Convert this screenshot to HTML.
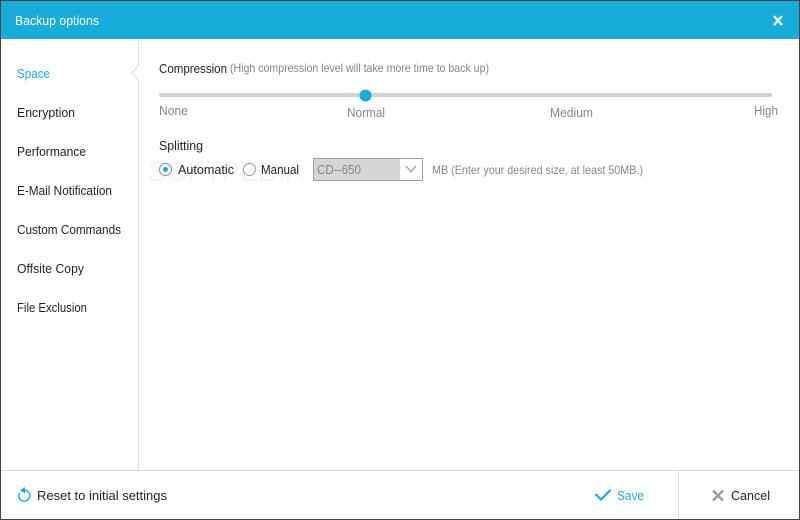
<!DOCTYPE html>
<html lang="en"><head><meta charset="utf-8"><title>Backup options</title>
<style>
html,body{margin:0;padding:0;background:#fff;width:800px;height:520px;overflow:hidden}
svg{display:block}
text{font-family:"Liberation Sans",sans-serif;font-size:13px;fill:#222233}
.g{fill:#85858f}
.b{fill:#18acdb}
</style></head><body>
<svg width="800" height="520" viewBox="0 0 800 520" xmlns="http://www.w3.org/2000/svg">
<rect width="800" height="520" fill="#fff"/>
<rect x="1" y="1" width="798" height="38" fill="#18acdb"/>
<!-- watermark -->
<text x="148" y="181" textLength="156" lengthAdjust="spacingAndGlyphs" style="font-size:28px;fill:#f5f5f5">SOFTPEDIA</text>
<text x="314" y="160" style="font-size:7px;fill:#eeeeee">®</text>
<!-- frame -->
<rect x="0" y="0" width="800" height="1" fill="#444"/>
<rect x="0" y="519" width="800" height="1" fill="#444"/>
<rect x="0" y="0" width="1" height="520" fill="#444"/>
<rect x="799" y="0" width="1" height="520" fill="#444"/>
<text x="15" y="25" textLength="84" lengthAdjust="spacingAndGlyphs" style="fill:#fff">Backup options</text>
<path d="M774 16l8 9M782 16l-8 9" stroke="#fff" stroke-width="2.200" fill="none"/>
<!-- sidebar divider -->
<path d="M138.500 41V65.500L131.500 73L138.500 80.500V470" stroke="#dcdcdc" fill="#fff"/>
<text x="17" y="78" textLength="33" lengthAdjust="spacingAndGlyphs" class="b">Space</text>
<text x="17" y="117" textLength="58" lengthAdjust="spacingAndGlyphs">Encryption</text>
<text x="17" y="156" textLength="69" lengthAdjust="spacingAndGlyphs">Performance</text>
<text x="17" y="195" textLength="95" lengthAdjust="spacingAndGlyphs">E-Mail Notification</text>
<text x="17" y="234" textLength="104" lengthAdjust="spacingAndGlyphs">Custom Commands</text>
<text x="17" y="273" textLength="67" lengthAdjust="spacingAndGlyphs">Offsite Copy</text>
<text x="17" y="312" textLength="70" lengthAdjust="spacingAndGlyphs">File Exclusion</text>
<!-- compression -->
<text x="159" y="73" textLength="68" lengthAdjust="spacingAndGlyphs">Compression</text>
<text x="230" y="72" textLength="259" lengthAdjust="spacingAndGlyphs" style="font-size:12px" class="g">(High compression level will take more time to back up)</text>
<rect x="159" y="93" width="613" height="4" rx="2" fill="#d0d0d0"/>
<circle cx="365.500" cy="95.500" r="6" fill="#18acdb"/>
<text x="159" y="115" textLength="29" lengthAdjust="spacingAndGlyphs" class="g">None</text>
<text x="347" y="117" textLength="38" lengthAdjust="spacingAndGlyphs" class="g">Normal</text>
<text x="550" y="117" textLength="43" lengthAdjust="spacingAndGlyphs" class="g">Medium</text>
<text x="754" y="115" textLength="24" lengthAdjust="spacingAndGlyphs" class="g">High</text>
<!-- splitting -->
<text x="159" y="150" textLength="44" lengthAdjust="spacingAndGlyphs">Splitting</text>
<circle cx="165.500" cy="169.500" r="6" fill="#fff" stroke="#8c8c8c"/>
<circle cx="165.500" cy="169.500" r="2.500" fill="#18acdb"/>
<text x="178" y="174" textLength="56" lengthAdjust="spacingAndGlyphs">Automatic</text>
<circle cx="249.500" cy="169.500" r="6" fill="#fff" stroke="#9c9c9c"/>
<text x="261" y="174" textLength="38" lengthAdjust="spacingAndGlyphs">Manual</text>
<rect x="313.500" y="158.500" width="109" height="22" fill="#fff" stroke="#9aa0a4"/>
<rect x="314" y="159" width="86" height="21" fill="#d6d6d6"/>
<text x="317" y="174" textLength="44" lengthAdjust="spacingAndGlyphs" class="g">CD--650</text>
<path d="M406 166l5 6 5-6" stroke="#8a8a8a" fill="none"/>
<text x="432" y="174" textLength="211" lengthAdjust="spacingAndGlyphs" style="font-size:12px" class="g">MB (Enter your desired size, at least 50MB.)</text>
<!-- footer -->
<rect x="1" y="470" width="798" height="1" fill="#dcdcdc"/>
<rect x="678" y="471" width="1" height="48" fill="#dcdcdc"/>
<path d="M22.500 490.500A5.500 5.500 0 1 1 19.500 493" stroke="#18acdb" stroke-width="1.400" fill="none"/>
<path d="M25 487v6.500l-5-3.200z" fill="#18acdb"/>
<text x="37" y="500" textLength="130" lengthAdjust="spacingAndGlyphs">Reset to initial settings</text>
<path d="M595.500 494l5.500 5.500 9.500-9.500" stroke="#18acdb" stroke-width="2.200" fill="none"/>
<text x="617" y="500" textLength="27" lengthAdjust="spacingAndGlyphs" class="b">Save</text>
<path d="M713 490.500l10 10M723 490.500l-10 10" stroke="#9a9a9a" stroke-width="2.400" fill="none"/>
<text x="731" y="500" textLength="39" lengthAdjust="spacingAndGlyphs">Cancel</text>
</svg>
</body></html>
